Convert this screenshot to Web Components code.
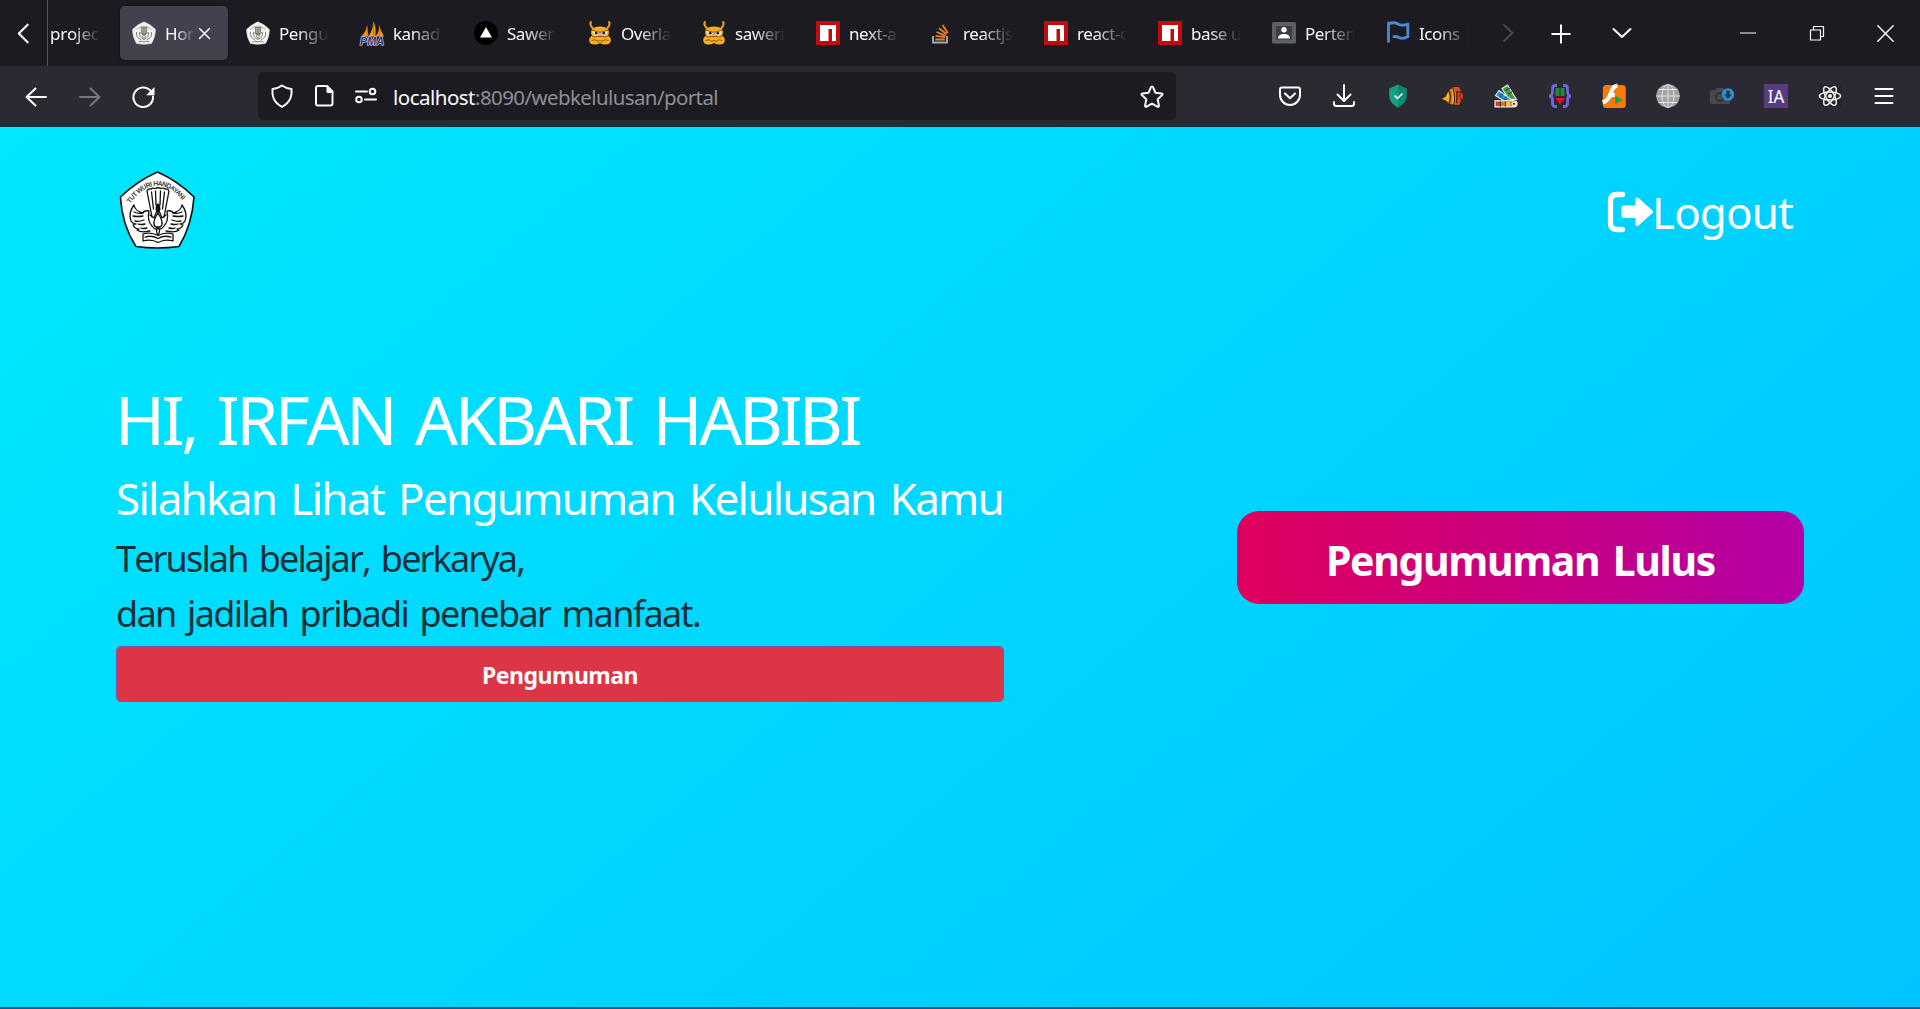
<!DOCTYPE html>
<html lang="id">
<head>
<meta charset="utf-8">
<title>Home</title>
<style>
html,body{margin:0;height:100%;overflow:hidden;font-family:"Noto Sans","Open Sans",sans-serif}
body{background:#1c1b22}
</style>
</head>
<body>
<browser-window></browser-window>
<script>
const npm = '<path fill="#c30b0b" d="M0 0h24v24H0z"/><path fill="#fff" d="M4 4h16v16h-4V8h-3.500v12H4z"/>';
const crest = '<path fill="#f4f4f2" stroke="#d8d8d4" stroke-width=".6" d="M12 .8Q18 3 23.500 8.500Q23.500 16 19.500 22.500Q12 24 4.500 22.500Q.5 16 .5 8.500Q6 3 12 .8Z"/><g fill="none" stroke="#77776f" stroke-width=".9"><path stroke="#a5a59e" d="M4.500 8.500Q12 1.500 19.500 8.500"/><path fill="#bdbdb6" d="M9 6.500h6l-1 6h-4Z"/><path d="M11.200 6.500v6M13 6.500v6"/><path d="M4.500 11Q3.500 17 9 18.500M19.500 11Q20.500 17 15 18.500M7.500 11.500q-.5 5 4.500 7q5-2 4.500-7q-2 0-2.500 2h-4q-.5-2-2.500-2ZM6.500 21q3-1.800 5.500 0q2.500-1.800 5.500 0"/><circle cx="12" cy="15.500" r="1.500"/></g>';
const saweria = '<path d="M4.500 7Q1.500 4 2.800 1M19.500 7Q22.500 4 21.200 1" fill="none" stroke="#e9a11f" stroke-width="2" stroke-linecap="round"/><path fill="#f4ad25" d="M3.800 8.500Q6 5.500 12 5.500T20.200 8.500Q21.800 12 20 14.500Q23 16.500 22.800 19.500Q22.500 23.500 18 23.500Q14 23.500 12 22Q10 23.500 6 23.500Q1.500 23.500 1.200 19.500Q1 16.500 4 14.500Q2.200 12 3.800 8.500Z"/><path fill="#f5f1e8" d="M4.500 10l6.500 1.500q-.5 3-3.300 3T4.500 10ZM19.500 10l-6.500 1.500q.5 3 3.300 3t3.200-4.500Z"/><circle cx="8.200" cy="12.200" r="1.400" fill="#222"/><circle cx="15.800" cy="12.200" r="1.400" fill="#222"/><path d="M3.500 9l7 2M20.500 9l-7 2M4 15q3 2 5 .5h6q2 1.500 5-.5M3.500 19.500q4-2 6.500 1q2-2.500 4 0q2.500-3 6.500-1" stroke="#8a520c" stroke-width=".9" fill="none"/><ellipse cx="12" cy="11.300" rx="1.500" ry="1.200" fill="#a67b97"/>';
const ICONS = {
 left:'<path class="s" d="M16 3.500L7.500 12L16 20.500"/>',
 right:'<path class="s" d="M8 4l8.500 8L8 20"/>',
 down:'<path class="s" d="M3.500 8l8.500 8 8.500-8"/>',
 plus:'<path class="s" d="M12 3.200v17.600M3.200 12h17.600"/>',
 x:'<path class="s" d="M4 4l16 16M20 4L4 20"/>',
 min:'<path class="s" d="M4.500 12h15"/>',
 restore:'<path class="s" d="M5.500 9h10v10h-10zM8.500 9V5.500h10v10h-3"/>',
 back:'<path class="s" d="M22 12H2.500M11.500 3.500L2.500 12l9 8.500"/>',
 fwd:'<path class="s" d="M2 12h19.500M12.500 3.500l9 8.500-9 8.500"/>',
 reload:'<path class="s" d="M21 11.500A9.800 9.800 0 1 1 18.800 6"/><path fill="currentColor" d="M22.500 2v8.300h-8.300z"/>',
 shield:'<path class="s" d="M12 1.500q4 3 9.500 3.500q.5 5-1 9Q18.500 19.500 12 22.800Q5.500 19.500 3.500 14Q2 10 2.500 5Q8 4.500 12 1.500Z"/>',
 doc:'<path class="s" d="M6 2h9l5.500 5.500V19.500a2 2 0 0 1-2 2H6a2 2 0 0 1-2-2V4a2 2 0 0 1 2-2Z"/><path fill="currentColor" d="M14.500 1.500l6.500 6.500v1h-5a1.500 1.500 0 0 1-1.500-1.500Z"/>',
 perm:'<path class="s" d="M2 7.500h11M11 15.500h11"/><circle class="s" cx="18.500" cy="7.500" r="2.800"/><circle class="s" cx="5" cy="15.500" r="2.800"/>',
 star:'<path class="s" d="M12 1.500q.8 0 1.200 1l2.300 5.300 6 .6q1.800.4.600 1.700L17.700 14.300l1.200 6.200q0 1.700-1.500 1.200L12 18.700l-5.400 3q-1.500.5-1.500-1.200l1.200-6.200L1.900 10.100Q.7 8.800 2.500 8.400l6-.6L10.800 2.500q.4-1 1.200-1Z"/>',
 pocket:'<path class="s" d="M4 3.500h16q2 0 2 2V11a10 10 0 0 1-20 0V5.500q0-2 2-2Z"/><path class="s" d="M7 9.500l5 4.800 5-4.800"/>',
 download:'<path class="s" d="M12 1v15.500M5.500 10.500l6.500 6.500 6.500-6.500M2 18v1.500q0 2.500 2.500 2.500h15q2.500 0 2.500-2.500V18"/>',
 adguard:'<path fill="#13a085" d="M12 .5L3.200 4.500V13Q4 19 12 23.800Z"/><path fill="#0d8a70" d="M12 .5l8.800 4V13Q20 19 12 23.800Z"/><path d="M8.500 11.500l3 3 5-5" fill="none" stroke="#fff" stroke-width="1.500"/>',
 fish:'<path fill="#f6b324" stroke="#241a12" stroke-width=".6" d="M.8 15l4.700-2.500Q8 5.500 14 3h5q1.500 2.500 1.500 5v8q0 3-1.500 5h-5Q8 20 5.500 16.500Z"/><path fill="#e4481c" d="M13.500 3.200H19q1.500 2.500 1.500 5v8q0 3-1.500 4.800h-4q2-9-1.500-17.800Z"/><path fill="#d9641a" d="M9 6.800l2-1.800q2.500 7.500.5 15l-2.500-1q2.500-6 0-12.200Z"/><path d="M8.800 7q2.800 6 .2 12M12.700 4q3.300 8.500 1 17M17 7v8q-1.500 2 0 4M17 8h3.500" fill="none" stroke="#24170f" stroke-width="1.100"/><path fill="#e4481c" stroke="#201610" stroke-width=".8" d="M20.200 10l3-2.500v9l-3-2.500Z"/><path fill="#163b35" d="M2.500 0h2v2h-2zM20.500 21h2v2h-2z"/>',
 palette:'<g stroke="#f4f4f4" stroke-width="1.100"><path fill="#42a03b" d="M8 4.500l5.500-3.500 9 14.500H15Z"/><path fill="#258bd5" d="M1.500 11.500L5 6.500L19 17H10Z"/><path fill="#e57736" d="M1 16.700h19a3.100 3.100 0 0 1 0 6.200H1Z"/></g><path fill="#d83b31" d="M2 18h4v4H2z"/><path fill="#e6c253" d="M12 18h4v4h-4z"/><path stroke="#143d2a" d="M11.500 6.500l4.500-2.500M14 10l4.500-2.500M6 13.500l3-4M10.500 16l2.500-3.500M6.500 17.500v5M11.500 17.500v5"/><circle cx="20" cy="19.800" r="2.300" fill="#fff"/><circle cx="20" cy="19.800" r="1.100" fill="#222"/>',
 braces:'<path d="M9 1.500H7Q4.500 1.500 4.500 5v3Q4.500 12 1 12q3.500 0 3.500 4v3q0 3.500 2.500 3.500h2M15 1.500h2q2.500 0 2.500 3.500v3q0 4 3.500 4q-3.500 0-3.500 4v3q0 3.500-2.500 3.500h-2" fill="none" stroke="#6c67dd" stroke-width="2.800"/><path fill="#24893a" d="M7.500 4h4v8h-4zM12.500 4h4v8h-4z"/><path fill="#f00b16" d="M7.500 14h9.500L12 20.500Z"/>',
 flash:'<rect x=".8" y="1" width="23" height="23" rx="3.500" fill="#f57c09"/><path d="M15.500 1.500Q11 2 9 9T.8 18.500M6 11h7" fill="none" stroke="#fff" stroke-width="4.200"/><path fill="#18a24b" d="M13 11.500l7.500 4.500-7.500 4Z"/>',
 globe:'<circle cx="12" cy="12" r="11.700" fill="#a2a2a2"/><path d="M12 0v24M0 12h24M2.500 5.500h19M2.500 18.500h19" stroke="#e2e2e2" fill="none"/><ellipse cx="12" cy="12" rx="6" ry="11.500" stroke="#e2e2e2" fill="none"/>',
 camera:'<path fill="#48484c" d="M0 8q0-2 2-2h3l2-2h6l2 2h5v14H2q-2 0-2-2Z"/><circle cx="10" cy="13" r="4" fill="none" stroke="#333338" stroke-width="2"/><circle cx="18" cy="10.500" r="6.200" fill="#2d90cf"/><path fill="#17364b" d="M16.300 6.500h3.400v4h2.300L18 14.800l-4-4.300h2.300Z"/>',
 ia:'<path fill="#583c80" d="M0 0h24v24H0z"/><text x="12" y="18.800" text-anchor="middle" textLength="16.500" lengthAdjust="spacingAndGlyphs" font-family="Noto Sans" font-size="18" fill="#fff">IA</text>',
 react:'<path fill="#242329" d="M1 1h22v22H1z"/><g fill="none" stroke="#ededed" stroke-width="1.500"><ellipse cx="12" cy="12" rx="10.500" ry="4.100"/><ellipse cx="12" cy="12" rx="10.500" ry="4.100" transform="rotate(60 12 12)"/><ellipse cx="12" cy="12" rx="10.500" ry="4.100" transform="rotate(120 12 12)"/></g><circle cx="12" cy="12" r="2.100" fill="#eee"/>',
 menu:'<path class="s" d="M3.500 5h17M3.500 12h17M3.500 19h17"/>',
 crest, npm, saweria,
 pma:'<path fill="#f39a20" d="M1 15.500Q6.500 11 7 4l1.500 11.500ZM8.500 15.500Q13 9 13.500 0l2 6.500v9ZM15.500 15.500Q20 10 19 4q2 6.500 5 11.500Z"/><path stroke="#bd6812" stroke-width=".8" d="M7 5v10.500M13.500 2v13.500M19.300 5v10.500"/><text x="0" y="23.800" font-family="Liberation Sans" font-weight="bold" font-style="italic" font-size="10" textLength="24" lengthAdjust="spacingAndGlyphs" fill="#35386f" stroke="#d6d7ea" stroke-width="1.100" paint-order="stroke">PMA</text>',
 vercel:'<circle cx="12" cy="12" r="12" fill="#000"/><path fill="#fff" d="M12 6l6 10.500H6Z"/>',
 stack:'<path d="M3 15v6.500h14V15" fill="none" stroke="#a9a9a9" stroke-width="1.900"/><g stroke="#ee7f28" stroke-width="1.800"><path d="M5.300 18.500h9.500M5.500 14.800l9.500 1.400M6.600 11l9 3.800M9 7.300l7.600 6M12.500 4l5.300 8"/></g>',
 person:'<rect y="1" width="24" height="21.500" rx="1.500" fill="#5c6063"/><path fill="#3a3e42" d="M4 5h16v13.500H4z"/><circle cx="12" cy="8.700" r="2.700" fill="#fff"/><path fill="#fff" d="M6 17.500q0-4.500 6-4.500t6 4.500Z"/>',
 flag:'<path d="M2.500 2V20.500M2.500 3q5-2.500 9.500 0T21.800 3v12.500q-4.500 3-9 1q-3-1.500-4.800-.8" fill="none" stroke="#4c87d2" stroke-width="2.900" stroke-linecap="round" stroke-linejoin="round"/>'
};
const define = (name, markup, setup) => customElements.define(name, class extends HTMLElement {
  constructor(){ super(); this.attachShadow({mode:'open'}); }
  connectedCallback(){
    this.shadowRoot.innerHTML = typeof markup === 'function' ? markup(this) : markup;
    if (setup) setup(this);
  }
});

define('ui-icon', el => `<style>
:host{display:block;flex:none;width:${el.getAttribute('size')||24}px;height:${el.getAttribute('size')||24}px;color:#fbfbfe}
:host([dim]){color:#77767e}:host([faint]){color:#4a4951}
svg{display:block;width:100%;height:100%;overflow:visible}
.s{fill:none;stroke:currentColor;stroke-width:${el.getAttribute('w')||2};stroke-linecap:round;stroke-linejoin:round}
</style><svg viewBox="0 0 24 24">${ICONS[el.getAttribute('name')]}</svg>`);

/* Spreads its letters so that the line fills the requested width. */
define('fit-text', '<style>:host{display:block;white-space:pre}span{display:inline-block;word-spacing:.1em;font-kerning:none}</style><span><slot></slot></span>', el => {
  const span = el.shadowRoot.querySelector('span');
  const gap = (+el.getAttribute('width') - span.getBoundingClientRect().width) / el.textContent.length;
  span.style.letterSpacing = gap + 'px';
});

define('browser-tab', el => `<style>
:host{box-sizing:border-box;display:flex;align-items:center;flex:none;width:108px;height:54px;padding-left:12px;border-radius:5px;color:#fbfbfe}
:host([active]){background:#42414d;box-shadow:0 0 3px #0008}
.t{flex:none;margin:1px 0 0 9px;width:50px;overflow:hidden;white-space:nowrap;font-size:17px;letter-spacing:-.4px;line-height:28px;-webkit-mask-image:linear-gradient(90deg,#000 35%,transparent);mask-image:linear-gradient(90deg,#000 35%,transparent)}
:host([active]) .t{width:30px}
.x{margin-left:2px}
</style><ui-icon name="${el.getAttribute('icon')}"></ui-icon><div class="t"><slot></slot></div>${el.hasAttribute('active')?'<ui-icon class="x" name="x" size="15" w="2.400"></ui-icon>':''}`);

const tabs = [['crest','Home'],['crest','Pengu'],['pma','kanad'],['vercel','Sawer|'],['saweria','Overla'],['saweria','saweri'],['npm','next-a'],['stack','reactjs'],['npm','react-c'],['npm','base u'],['person','Perten'],['flag','Icons |']];
define('tab-strip', `<style>
:host{display:flex;align-items:center;height:66px;background:#1c1b22;flex:none}
.prev{width:47px;display:flex;justify-content:center;border-right:1px solid #55545c;height:100%;align-items:center}
.cut{width:52px;padding:1px 0 0 2px;margin-right:18px;color:#fbfbfe;font-size:17px;letter-spacing:-.1px;line-height:28px;overflow:hidden;-webkit-mask-image:linear-gradient(90deg,#000 45%,transparent 98%);mask-image:linear-gradient(90deg,#000 45%,transparent 98%)}
.tabs{display:flex;gap:6px;width:1374px}
.c{display:flex;justify-content:center;flex:none}
</style>
<div class="prev"><ui-icon name="left" size="25"></ui-icon></div><div class="cut">projec</div>
<div class="tabs">${tabs.map((t,i)=>`<browser-tab icon="${t[0]}"${i?'':' active'}>${t[1]}</browser-tab>`).join('')}</div>
<div class="c" style="width:30px"><ui-icon name="right" faint></ui-icon></div>
<div class="c" style="width:76px;padding-top:1px"><ui-icon name="plus"></ui-icon></div>
<div class="c" style="width:46px"><ui-icon name="down"></ui-icon></div>
<div class="c" style="width:68px"></div>
<div class="c" style="width:69px"><ui-icon name="min" w="1.200"></ui-icon></div>
<div class="c" style="width:69px"><ui-icon name="restore" w="1.200"></ui-icon></div>
<div class="c" style="width:69px"><ui-icon name="x" size="23" w="1.500"></ui-icon></div>`);

define('nav-bar', `<style>
:host{box-sizing:border-box;display:flex;align-items:center;height:60px;background:#2b2a33;padding:0 9px;flex:none}
.cell{width:54px;display:flex;justify-content:center;padding-top:2px}
.url{box-sizing:border-box;display:flex;align-items:center;width:918px;height:48px;margin-left:87px;background:#1c1b22;border-radius:5px;padding:0 12px;font-size:20.500px;line-height:30px}
.url ui-icon{margin-right:18px}.url ui-icon:nth-of-type(3){margin-right:15px}
.url ui-icon.star{margin:1px 0 0 auto}
.url fit-text{padding-top:2px}
.host{color:#fbfbfe}.path{color:#8f8e96}
.ext{display:flex;margin-left:auto}.ext .cell{padding:0}
</style>
<div class="cell"><ui-icon name="back"></ui-icon></div><div class="cell"><ui-icon name="fwd" dim></ui-icon></div><div class="cell"><ui-icon name="reload"></ui-icon></div>
<div class="url"><ui-icon name="shield"></ui-icon><ui-icon name="doc"></ui-icon><ui-icon name="perm"></ui-icon><fit-text class="host" width="82">localhost</fit-text><fit-text class="path" width="243">:8090/webkelulusan/portal</fit-text><ui-icon class="star" name="star"></ui-icon></div>
<div class="ext">${['pocket','download','adguard','fish','palette','braces','flash','globe','camera','ia','react','menu'].map(n=>`<div class="cell"><ui-icon name="${n}"></ui-icon></div>`).join('')}</div>`);

const wing = '<path d="M15 34Q9 42 12 50q2 3 5 3l-3 1q2 4 6 4l-2 1q4 3 13 1M15 34q1 6 9 8M24 42q-5 1-9-1M24 45q-6 1-10 0M25 49q-5 2-9 1M26 53q-4 1-7 0M28 57q-4 1-6 0M24 42q1-3 6-2q-2 10 3 15q2 3 4 3"/>';
define('school-crest', `<style>:host{display:block;width:76px;height:78px;margin-left:-1px}svg{display:block;overflow:visible}</style>
<svg width="76" height="78" viewBox="0 0 76 78"><path d="M38.500 1Q59 10 75 26Q73 54 60 75.500Q38 78.500 17 75.500Q3 54 1.500 26Q18 10 38.500 1Z" fill="#fff" stroke="#111" stroke-width="1.600"/>
<path id="arc" fill="none" d="M11 32.500Q24 14.500 38.500 14.500T66 32.500"/><text font-family="Liberation Sans" font-size="6.500" fill="#222" stroke="#222" stroke-width=".2"><textPath href="#arc" textLength="64">TUT WURI HANDAYANI</textPath></text>
<g fill="none" stroke="#111" stroke-width="1.300" stroke-linecap="round" stroke-linejoin="round">
<path d="M33 46L28 20q1-2.500 4-2q1.500-1.500 4-.5q3-1.500 6 0q2.500-1 4 .5q3-.5 4 2l-5 26M32.500 21l2 17M36.500 20l.5 14M41.500 20l-.5 14M45.500 21l-2 17"/>
<path d="M31 44l4 3 4-10 4 10 4-3M39 33q-3 4-1 8h2q2-4-1-8Z"/><path fill="#111" d="M38 34h2v6h-2z"/>
<path d="M39 42q-7 11-2 14h4q5-3-2-14ZM39 56q-3 4 0 8q3-4 0-8Z"/>
${wing}<g transform="matrix(-1 0 0 1 78 0)">${wing}</g>
<path d="M24 63q8-2.500 15 1.500q7-4 15-1.500v7q-8-2.500-15 1.500q-7-4-15-1.500ZM26 66q7-2 13 1.500q6-3.500 13-1.500"/></g></svg>`);

define('site-header', `<style>:host{display:flex;justify-content:space-between;align-items:flex-start}
a{display:flex;color:#fff;font-size:44px;line-height:60px;padding-top:11px;margin-right:11px}
svg{width:46px;height:42px;flex:none;margin-top:9px;margin-right:-1px}</style>
<school-crest></school-crest><a><svg viewBox="0 0 46 42"><path d="M15.500 3.500H10Q3.500 3.500 3.500 10V32q0 6.500 6.500 6.500h5.500" fill="none" stroke="#fff" stroke-width="5.300" stroke-linecap="round"/><path fill="#fff" d="M17 14.500h11.500V8.500q0-3 3-1.500L45.500 19.500q1.400 1.300 0 2.600L31.500 34.500q-3 1.500-3-1.500V27H17q-2.500 0-2.500-2.500v-7.500Q14.500 14.500 17 14.500Z"/></svg><fit-text width="141">Logout</fit-text></a>`);

define('action-button', `<style>:host{box-sizing:border-box;display:flex;justify-content:center;align-items:center;color:#fff;font-weight:700}
:host([kind=danger]){height:56px;margin-top:5px;background:#dc3545;border:1px solid #7952b3;border-radius:5px;font-size:23px;line-height:30px;padding-top:2px}
:host([kind=result]){width:567px;height:93px;border-radius:22px;background:linear-gradient(90deg,#df005d,#b400a5);font-size:41px;line-height:54px;padding-top:4px}</style><slot></slot>`);

define('portal-page', `<style>
:host{box-sizing:border-box;display:flex;flex-direction:column;flex:1;padding:44px 116px 0 120px;background:linear-gradient(140deg,#00e7ff,#00c4ff);border-top:1px solid #12343f;border-bottom:2px solid #1b568a}
main{display:flex;justify-content:space-between;align-items:flex-start;margin:127px 0 0 -4px}
.left{width:888px}
.h{color:#fff;font-size:67.600px;line-height:84px;padding-top:1px;margin-left:-1px}
.sub{color:#fff;font-size:44px;line-height:54px;margin:10px 0 6px}
.p{color:#13303a;font-size:36px;line-height:55px}
.right{padding-top:135px}
</style><site-header></site-header><main><section class="left">
<fit-text class="h" width="744">HI, IRFAN AKBARI HABIBI</fit-text>
<fit-text class="sub" width="887">Silahkan Lihat Pengumuman Kelulusan Kamu</fit-text>
<fit-text class="p" width="408">Teruslah belajar, berkarya,</fit-text>
<fit-text class="p" width="584">dan jadilah pribadi penebar manfaat.</fit-text>
<action-button kind="danger"><fit-text width="156">Pengumuman</fit-text></action-button></section>
<section class="right"><action-button kind="result"><fit-text width="389">Pengumuman Lulus</fit-text></action-button></section></main>`);

define('browser-window', `<style>:host{display:flex;flex-direction:column;height:100vh}</style><tab-strip></tab-strip><nav-bar></nav-bar><portal-page></portal-page>`);
</script>
</body>
</html>
